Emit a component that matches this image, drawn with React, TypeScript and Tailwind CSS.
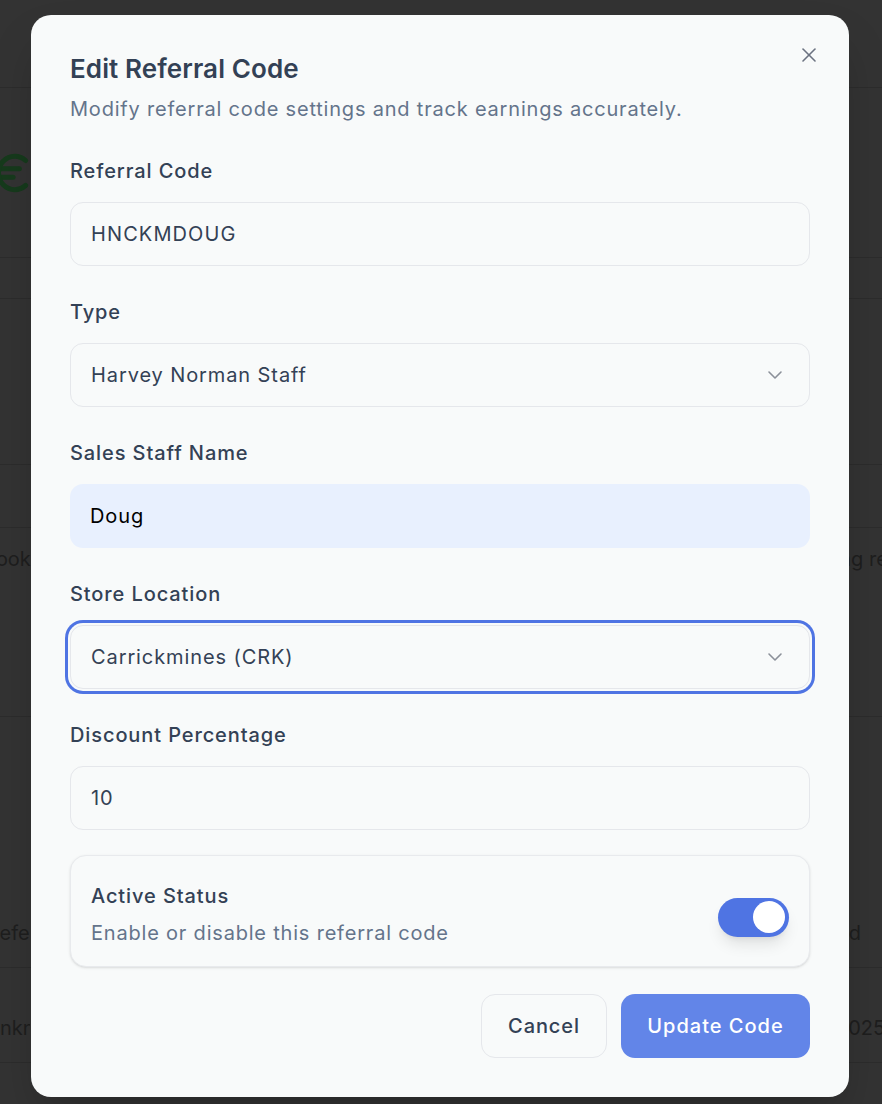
import React from "react";
import { X, ChevronDown, Euro } from "lucide-react";

function Field({ label, children }: { label: string; children: React.ReactNode }) {
  return (
    <div className="flex flex-col">
      <div className="h-7 text-[20px] leading-7 font-medium tracking-[0.9px] text-[#334155] mb-[17px]">{label}</div>
      {children}
    </div>
  );
}

export default function App() {
  return (
    <div
      className="relative w-[882px] h-[1104px] overflow-hidden bg-[#333333]"
      style={{ fontFamily: "Inter, 'Noto Sans', sans-serif" }}
    >
      {/* background page (dimmed) */}
      <div className="flex flex-col text-[20px] text-[#1e1e1e] whitespace-nowrap">
        <div className="h-[88px] border-b border-[#2c2c2c]" />
        <div className="h-[170px] border-b border-[#2c2c2c] flex items-center">
          <Euro size={50} strokeWidth={2.4} className="ml-[-14px] text-[#163a1c]" />
        </div>
        <div className="h-[41px] border-b border-[#2c2c2c]" />
        <div className="h-[166px] border-b border-[#2c2c2c]" />
        <div className="h-[63px] border-b border-[#2c2c2c]" />
        <div className="h-[189px] border-b border-[#2c2c2c] pt-[16px] flex">
          <span className="ml-[-62px] w-[92px] shrink-0">Facebook</span>
          <span className="ml-[756px] shrink-0">Pending review</span>
        </div>
        <div className="h-[251px] border-b border-[#2c2c2c] pt-[201px] flex">
          <span className="ml-[-13px] w-[43px] shrink-0 overflow-hidden">Referral</span>
          <span className="ml-[790px] shrink-0">Paid</span>
        </div>
        <div className="h-[95px] border-b border-[#2c2c2c] pt-[45px] flex">
          <span className="ml-[-15px] w-[45px] shrink-0 overflow-hidden">Unknown</span>
          <span className="ml-[806px] shrink-0">2025</span>
        </div>
      </div>

      {/* modal */}
      <div className="absolute left-[31px] top-[15px] w-[818px] rounded-[20px] bg-[#f8fafa] px-[39px] pt-[37px] pb-[39px] shadow-2xl">
        <button className="absolute right-[28px] top-[28px] text-[#6b7280]">
          <X size={24} strokeWidth={1.6} />
        </button>
        <h2 className="text-[26px] leading-[34px] font-semibold tracking-[0.1px] text-[#334155]">Edit Referral Code</h2>
        <p className="mt-[9px] text-[20px] leading-7 tracking-[0.8px] text-[#64748b]">
          Modify referral code settings and track earnings accurately.
        </p>

        <div className="mt-[34px] flex flex-col gap-[32px]">
          <Field label="Referral Code">
            <div className="h-[64px] rounded-[13px] border border-[#e5e7eb] bg-[#f8fafa] px-5 flex items-center text-[20px] tracking-[1.1px] text-[#334155]">
              HNCKMDOUG
            </div>
          </Field>
          <Field label="Type">
            <div className="h-[64px] rounded-[13px] border border-[#e5e7eb] bg-[#f8fafa] pl-5 pr-[22px] flex items-center justify-between text-[20px] tracking-[0.9px] text-[#334155]">
              <span>Harvey Norman Staff</span>
              <ChevronDown size={24} strokeWidth={1.6} className="text-[#8b9099]" />
            </div>
          </Field>
          <Field label="Sales Staff Name">
            <div className="h-[64px] rounded-[13px] bg-[#e8f0fe] px-5 flex items-center text-[20px] tracking-[0.9px] text-black">
              Doug
            </div>
          </Field>
          <Field label="Store Location">
            <div className="h-[64px] rounded-[13px] border border-[#e5e7eb] bg-[#f8fafa] pl-5 pr-[22px] flex items-center justify-between text-[20px] tracking-[0.9px] text-[#334155] ring-[3px] ring-[#4f74e3] ring-offset-[2px] ring-offset-[#f8fafa]">
              <span>Carrickmines (CRK)</span>
              <ChevronDown size={24} strokeWidth={1.6} className="text-[#8b9099]" />
            </div>
          </Field>
          <Field label="Discount Percentage">
            <div className="h-[64px] rounded-[13px] border border-[#e5e7eb] bg-[#f8fafa] px-5 flex items-center text-[20px] tracking-[0.9px] text-[#334155]">
              10
            </div>
          </Field>
        </div>

        <div className="mt-[25px] h-[112px] rounded-[16px] border border-[#e8eaed] bg-[#f8fafa] shadow-sm px-5 pt-[6px] flex items-center justify-between">
          <div className="flex flex-col">
            <span className="text-[20px] leading-7 font-medium tracking-[0.9px] text-[#334155]">Active Status</span>
            <span className="mt-[9px] text-[20px] leading-7 tracking-[0.8px] text-[#64748b]">Enable or disable this referral code</span>
          </div>
          <div className="mt-[6px] w-[71px] h-[39px] rounded-full bg-[#4f74e3] flex items-center justify-end pr-[4px] shadow-lg">
            <div className="w-[32px] h-[32px] rounded-full bg-white" />
          </div>
        </div>

        <div className="mt-[27px] flex justify-end gap-[14px]">
          <button className="w-[126px] h-[64px] rounded-[14px] border border-[#e5e7eb] bg-[#f8fafa] text-[20px] font-medium tracking-[0.9px] text-[#334155]">
            Cancel
          </button>
          <button className="w-[189px] h-[64px] rounded-[14px] bg-[#6285e8] text-[20px] font-medium tracking-[1px] text-white">
            Update Code
          </button>
        </div>
      </div>
    </div>
  );
}
